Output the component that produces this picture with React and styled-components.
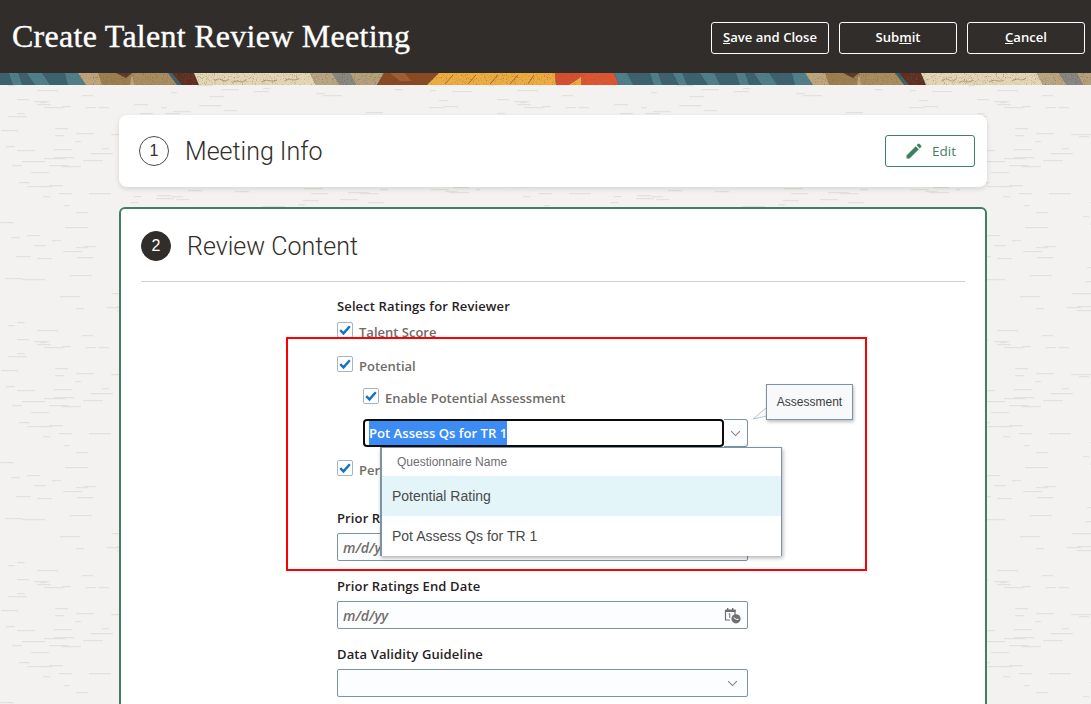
import React from 'react';
import styled, { createGlobalStyle } from 'styled-components';
import { MdEdit } from 'react-icons/md';

const dashes = () => {
  // seeded so the wall texture stays the same between loads
  let seed = 11;
  const next = (n) => {
    seed = (seed * 16807) % 2147483647;
    return seed % n;
  };
  let out = '';
  for (let i = 0; i < 290; i += 1) {
    const x = next(480);
    const y = next(240);
    const w = 6 + next(18);
    out += `<rect x='${x}' y='${y}' width='${w}' height='1.3' rx='.6' fill='%23e3e1de'/>`;
  }
  return `url("data:image/svg+xml,<svg xmlns='http://www.w3.org/2000/svg' width='480' height='240'>${out}</svg>")`;
};

const GlobalStyle = createGlobalStyle`
  html, body {
    margin: 0;
    height: 704px;
    overflow: hidden;
    background: #f3f2f0;
    font-family: "Open Sans", "Noto Sans", sans-serif;
  }
`;

const Page = styled.div`
  width: 1091px;
  height: 704px;
  overflow: hidden;
`;

const Header = styled.header`
  height: 73px;
  background: #312d2a;
  display: flex;
  align-items: center;
  justify-content: space-between;
  padding: 0 6px 0 12px;
  box-sizing: border-box;
`;

const Title = styled.h1`
  margin: 0;
  font-family: "Liberation Serif", serif;
  font-weight: 400;
  font-size: 32px;
  letter-spacing: 0.27px;
  -webkit-text-stroke: 0.35px #fff;
  color: #fff;
`;

const Actions = styled.div`
  display: flex;
  gap: 10px;
  margin-top: 3px;
`;

const HeaderButton = styled.button`
  width: 118px;
  height: 32px;
  background: transparent;
  border: 1px solid #fff;
  border-radius: 3px;
  color: #fff;
  font: 600 13.1px "Open Sans", sans-serif;
  padding: 0 0 2px;
`;

const Strip = styled.svg`
  display: block;
  width: 1091px;
  height: 12px;
`;

const Main = styled.main`
  position: relative;
  height: 619px;
  padding: 30px 0 0 119px;
  box-sizing: border-box;
  background: #f3f2f0 ${dashes()};
`;

const Card = styled.section`
  width: 868px;
  height: 72px;
  box-sizing: border-box;
  background: #fff;
  border-radius: 8px;
  box-shadow: 0 2px 5px rgba(0, 0, 0, 0.12);
  display: flex;
  align-items: center;
  justify-content: space-between;
  padding: 0 12px 0 20px;
  margin-bottom: 20px;
`;

const Heading = styled.div`
  display: flex;
  align-items: center;
  gap: 16px;
`;

const StepNumber = styled.span`
  width: 30px;
  height: 30px;
  box-sizing: border-box;
  border-radius: 50%;
  display: flex;
  align-items: center;
  justify-content: center;
  font: 400 16px "Liberation Sans", sans-serif;
  border: 1px solid ${(p) => (p.$active ? '#312d2a' : '#4f4c4a')};
  background: ${(p) => (p.$active ? '#312d2a' : '#fff')};
  color: ${(p) => (p.$active ? '#fff' : '#312d2a')};
`;

const StepTitle = styled.h2`
  margin: 0;
  font: 300 25px Roboto, sans-serif;
  color: #312d2a;
`;

const EditButton = styled.button`
  width: 90px;
  height: 32px;
  background: #fff;
  border: 1px solid #3f8062;
  border-radius: 3px;
  color: #3f7f66;
  font: 500 13.5px "Open Sans", sans-serif;
  display: flex;
  align-items: center;
  justify-content: center;
  gap: 8px;
  padding: 0;
`;

const ContentCard = styled.section`
  width: 868px;
  height: 520px;
  box-sizing: border-box;
  background: #fff;
  border: 2px solid #3f8062;
  border-radius: 6px;
  padding: 22px 20px 0;
`;

const ContentHead = styled(Heading)`
  padding-bottom: 20px;
  border-bottom: 1px solid #d0cfcd;
`;

const Form = styled.div`
  margin: 15px 0 0 196px;
  width: 411px;
`;

const Label = styled.div`
  font-size: 13px;
  font-weight: 600;
  line-height: 18px;
  letter-spacing: 0.12px;
  color: #26221f;
`;

const CheckRow = styled.label`
  display: flex;
  align-items: center;
  gap: 6px;
  height: ${(p) => p.$height}px;
  margin-left: ${(p) => (p.$nested ? 26 : 0)}px;
  font-size: 13px;
  font-weight: 600;
  color: #6f6b68;
`;

const Box = styled.span`
  width: 16px;
  height: 16px;
  flex: none;
  box-sizing: border-box;
  margin-bottom: 4px;
  border: 1px solid #a7b4c0;
  border-radius: 2px;
  background: #fff;
  display: flex;
  align-items: center;
  justify-content: center;
`;

const ComboRow = styled.div`
  display: flex;
  height: 28px;
  margin: 6px 0 0 26px;
`;

const ComboText = styled.div`
  width: 361px;
  box-sizing: border-box;
  border: 2px solid #0c0c0c;
  border-radius: 4px;
  display: flex;
  align-items: center;
  padding-left: 4px;
`;

const Selected = styled.span`
  background: #3b8df5;
  color: #fff;
  font-size: 13.1px;
  font-weight: 600;
  line-height: 24px;
`;

const ComboArrow = styled.div`
  flex: 1;
  box-sizing: border-box;
  border: 1px solid #7d93a5;
  border-left: 0;
  border-radius: 0 3px 3px 0;
  background: #fcfdfe;
  display: flex;
  align-items: center;
  justify-content: center;
`;

const FieldLabel = styled(Label)`
  margin-top: 16px;
  margin-bottom: 6px;
`;

const Field = styled.div`
  height: 28px;
  box-sizing: border-box;
  border: 1px solid #7d93a5;
  border-radius: 2px;
  background: #fcfdfe;
  display: flex;
  align-items: center;
  justify-content: space-between;
  padding: 0 ${(p) => (p.$arrow ? 9 : 6)}px 0 5px;
  font-size: 14px;
  font-style: italic;
  font-weight: 600;
  color: #716d6a;
`;

const Annotation = styled.div`
  position: absolute;
  left: 286px;
  top: 252px;
  width: 581px;
  height: 234px;
  box-sizing: border-box;
  border: 2px solid #f00;
  pointer-events: none;
`;

const Tip = styled.div`
  position: absolute;
  left: 766px;
  top: 299px;
  width: 87px;
  height: 36px;
  box-sizing: border-box;
  background: #f8f9fa;
  border: 1px solid #7d93a5;
  box-shadow: 1px 2px 3px rgba(0, 0, 0, 0.25);
  display: flex;
  align-items: center;
  justify-content: center;
  font: 400 12px "Liberation Sans", sans-serif;
  color: #3c3c3c;
`;

const TipTail = styled.svg`
  position: absolute;
  left: 752px;
  top: 320px;
`;

const Menu = styled.div`
  position: absolute;
  left: 380px;
  top: 362px;
  width: 402px;
  height: 109px;
  box-sizing: border-box;
  background: #fff;
  border: 1px solid #7d93a5;
  border-left-width: 2px;
  box-shadow: 1px 2px 4px rgba(0, 0, 0, 0.3);
  font-family: "Liberation Sans", sans-serif;
`;

const MenuHead = styled.div`
  height: 28px;
  padding-left: 15px;
  display: flex;
  align-items: center;
  font-size: 12px;
  color: #6e6e6e;
`;

const MenuItem = styled.div`
  height: 40px;
  padding-left: 10px;
  display: flex;
  align-items: center;
  font-size: 14px;
  color: #4a4a4a;
  background: ${(p) => (p.$active ? '#e4f5fa' : '#fff')};
`;

const Check = () => (
  <svg width="14" height="14" viewBox="0 0 14 14">
    <path d="M2.2 7.2 5.5 10.4 11.8 3.2" fill="none" stroke="#1272c4" strokeWidth="2.4" />
  </svg>
);

const Chevron = () => (
  <svg width="11" height="7" viewBox="0 0 12 8">
    <path d="M1 1.2 6 6.4 11 1.2" fill="none" stroke="#838280" strokeWidth="1.2" />
  </svg>
);

const CalendarClock = () => (
  <svg width="17" height="17" viewBox="0 0 17 17">
    <path d="M1.5 3h9.5v5M1.5 3v10H6" fill="none" stroke="#6f6f6f" strokeWidth="1.2" />
    <path d="M1 3h10.5v2H1zM3 1h1.4v2H3zM8 1h1.4v2H8z" fill="#6f6f6f" />
    <path d="M4.6 7.2 5.8 6.6V11" fill="none" stroke="#6f6f6f" strokeWidth="1" />
    <circle cx="12" cy="11.8" r="4.6" fill="#6f6f6f" />
    <path d="M9.6 10.6 12.2 12.4 14.6 12.2" fill="none" stroke="#fff" strokeWidth="1" />
  </svg>
);

const Wave = () => (
  <Strip viewBox="0 0 1091 12" preserveAspectRatio="none">
    <defs>
      <filter id="grain" x="0" y="0" width="100%" height="100%">
        <feTurbulence type="fractalNoise" baseFrequency="0.9" numOctaves="2" seed="4" />
        <feColorMatrix values="0 0 0 0 0.15  0 0 0 0 0.1  0 0 0 0 0.05  0 0 0 2.2 -1.2" />
        <feComposite in2="SourceGraphic" operator="in" />
        <feMerge>
          <feMergeNode in="SourceGraphic" />
          <feMergeNode />
        </feMerge>
      </filter>
      <g id="tile">
        <rect width="727" height="12" fill="#38626f" />
        <path d="M9 0h9l4 12h-9zM27 0h15l8 12H35zM65 0h13l8 12H68z" fill="#4e7f8c" />
        <path d="M78 0h52l10 12H86z" fill="#bfa57b" />
        <path d="M98 0h34l-2 12h-28z" fill="#9d7f50" />
        <path d="M116 0h16l-6 5z" fill="#5a3a2a" />
        <path d="M132 0h36l9 12h-43z" fill="#a98d5f" />
        <path d="M172 0h22l5 12h-17z" fill="#5e2f22" />
        <path d="M194 0h116l6 12H199z" fill="#e4d6b5" />
        <path d="M215 8c6-6 8 4 14-2M232 10c5-5 9 2 14-3M262 9c6-5 9 2 15-2M285 8c5-5 9 2 14-3" fill="none" stroke="#bba886" strokeWidth="1.2" />
        <path d="M310 0h22l8 12h-24z" fill="#b9a582" />
        <path d="M332 0h18l6 12h-16z" fill="#8a8680" />
        <path d="M350 0h34l-7 12h-21z" fill="#b5a07c" />
        <path d="M384 0h55l-12 12h-50z" fill="#8b4a23" />
        <path d="M390 0h14l8 8h-12z" fill="#a35f32" />
        <path d="M439 0h116l1 12H427z" fill="#eeac41" />
        <path d="M445 11l8-9M468 11l8-9M490 11l8-9M510 11l8-9M528 11l6-9" stroke="#a8682c" strokeWidth="1" />
        <path d="M555 0h26v4l-12 8h-13z" fill="#d9502f" />
        <path d="M569 12l12-8v8z" fill="#eeac41" />
        <path d="M581 0h33l5 12h-38z" fill="#de5433" />
        <path d="M614 0h113v12H619z" fill="#38626f" />
        <path d="M614 0h13l6 12h-14zM650 0h8l4 12h-8zM673 0h9l5 12h-8zM700 0h14l6 12h-12z" fill="#4e7f8c" />
      </g>
    </defs>
    <g filter="url(#grain)">
      <use href="#tile" />
      <use href="#tile" x="727" />
    </g>
  </Strip>
);

export default function App() {
  return (
    <Page>
      <GlobalStyle />
      <Header>
        <Title>Create Talent Review Meeting</Title>
        <Actions>
          <HeaderButton><u>S</u>ave and Close</HeaderButton>
          <HeaderButton>Sub<u>m</u>it</HeaderButton>
          <HeaderButton><u>C</u>ancel</HeaderButton>
        </Actions>
      </Header>
      <Wave />
      <Main>
        <Card>
          <Heading>
            <StepNumber>1</StepNumber>
            <StepTitle>Meeting Info</StepTitle>
          </Heading>
          <EditButton><MdEdit size={20} color="#3f8062" />Edit</EditButton>
        </Card>
        <ContentCard>
          <ContentHead>
            <StepNumber $active>2</StepNumber>
            <StepTitle>Review Content</StepTitle>
          </ContentHead>
          <Form>
            <Label>Select Ratings for Reviewer</Label>
            <CheckRow $height={34}><Box><Check /></Box>Talent Score</CheckRow>
            <CheckRow $height={34}><Box><Check /></Box>Potential</CheckRow>
            <CheckRow $nested $height={30}><Box><Check /></Box>Enable Potential Assessment</CheckRow>
            <ComboRow>
              <ComboText><Selected>Pot Assess Qs for TR 1</Selected></ComboText>
              <ComboArrow><Chevron /></ComboArrow>
            </ComboRow>
            <CheckRow $height={46}><Box><Check /></Box>Performance</CheckRow>
            <FieldLabel>Prior Ratings Start Date</FieldLabel>
            <Field>m/d/yy</Field>
            <FieldLabel>Prior Ratings End Date</FieldLabel>
            <Field>m/d/yy<CalendarClock /></Field>
            <FieldLabel>Data Validity Guideline</FieldLabel>
            <Field $arrow><span /><Chevron /></Field>
          </Form>
        </ContentCard>
        <Annotation />
        <TipTail width="16" height="16" viewBox="0 0 16 16">
          <path d="M15 2 1 14 15 11" fill="#f8f9fa" stroke="#b9c4ce" strokeWidth="1" />
        </TipTail>
        <Tip>Assessment</Tip>
        <Menu>
          <MenuHead>Questionnaire Name</MenuHead>
          <MenuItem $active>Potential Rating</MenuItem>
          <MenuItem>Pot Assess Qs for TR 1</MenuItem>
        </Menu>
      </Main>
    </Page>
  );
}
